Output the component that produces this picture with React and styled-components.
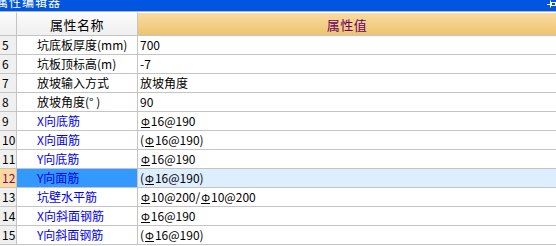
import React from 'react';
import styled, { createGlobalStyle } from 'styled-components';

const GlobalStyle = createGlobalStyle`
  html, body {
    margin: 0;
    padding: 0;
    background: #ffffff;
    overflow: hidden;
  }
  body {
    font-family: "Noto Sans CJK SC", "Noto Sans", sans-serif;
    font-size: 12px;
    color: #000;
  }
`;

const Panel = styled.div`
  width: 556px;
  height: 246px;
  overflow: hidden;
  display: flex;
  flex-direction: column;
`;

const TitleBar = styled.div`
  height: 11px;
  flex: none;
  background: #0056e0;
  border-bottom: 1px solid #a9b4c4;
  display: flex;
  align-items: flex-start;
  justify-content: space-between;
  overflow: hidden;
`;

const Title = styled.span`
  color: #fff;
  font-size: 12px;
  line-height: 12px;
  margin: -4px 0 0 -4px;
  letter-spacing: 1px;
`;

const PinIcon = styled.svg`
  width: 9px;
  height: 8px;
  margin-right: 0px;
  flex: none;
`;

const Grid = styled.div`
  display: grid;
  grid-template-columns: 17px 121px 1fr;
  grid-auto-rows: 19px;
`;

const HeaderCell = styled.div`
  height: 24px;
  box-sizing: border-box;
  border-top: 1px solid #fff;
  border-bottom: 1px solid #c4c4c4;
  border-right: ${p => (p.$last ? 'none' : '1px solid #c4c4c4')};
  background: ${p =>
    p.$accent
      ? 'linear-gradient(#f9dca3, #efc36d)'
      : 'linear-gradient(#fbfbfb, #efefef)'};
  color: ${p => (p.$accent ? '#6a006a' : '#000')};
  font-size: 13px;
  display: flex;
  align-items: center;
  justify-content: center;
  letter-spacing: 0.5px;
`;

const HeaderRow = styled(Grid)`
  grid-auto-rows: 24px;
`;

const NumCell = styled.div`
  box-sizing: border-box;
  border-right: 1px solid #c4c4c4;
  border-bottom: 1px solid #c4c4c4;
  background: ${p => (p.$active ? '#fed99a' : '#f0f0f0')};
  color: ${p => (p.$active ? '#7a0a7a' : '#000')};
  padding-left: 2px;
  line-height: 18px;
  font-size: 12px;
`;

const NameCell = styled.div`
  box-sizing: border-box;
  border-right: 1px solid #c4c4c4;
  border-bottom: 1px solid #c4c4c4;
  background: ${p => (p.$active ? '#3399ff' : '#fff')};
  color: ${p => (p.$link ? '#0000ee' : '#000')};
  padding-left: 20px;
  line-height: 18px;
  white-space: nowrap;
  overflow: hidden;
`;

const ValueCell = styled.div`
  box-sizing: border-box;
  border-bottom: 1px solid #c4c4c4;
  background: ${p => (p.$active ? '#ddeeff' : '#fff')};
  padding-left: 2px;
  line-height: 18px;
  white-space: nowrap;
  overflow: hidden;
`;

const Rebar = styled.span`
  display: inline-block;
  border-bottom: 1px solid #000;
  line-height: 11px;
  margin: 0 1px 0 1px;
  font-size: 11px;
`;

// renders a value, turning each Φ into the steel grade mark
const Value = ({ text }) => {
  const parts = text.split('Φ');
  return (
    <>
      {parts.map((p, i) => (
        <React.Fragment key={i}>
          {i > 0 && <Rebar>Φ</Rebar>}
          {p}
        </React.Fragment>
      ))}
    </>
  );
};

const rows = [
  { n: 5, name: '坑底板厚度(mm)', value: '700' },
  { n: 6, name: '坑板顶标高(m)', value: '-7' },
  { n: 7, name: '放坡输入方式', value: '放坡角度' },
  { n: 8, name: '放坡角度(° )', value: '90' },
  { n: 9, name: 'X向底筋', value: 'Φ16@190', link: true },
  { n: 10, name: 'X向面筋', value: '(Φ16@190)', link: true },
  { n: 11, name: 'Y向底筋', value: 'Φ16@190', link: true },
  { n: 12, name: 'Y向面筋', value: '(Φ16@190)', link: true, active: true },
  { n: 13, name: '坑壁水平筋', value: 'Φ10@200/Φ10@200', link: true },
  { n: 14, name: 'X向斜面钢筋', value: 'Φ16@190', link: true },
  { n: 15, name: 'Y向斜面钢筋', value: '(Φ16@190)', link: true },
];

export default function App() {
  return (
    <>
      <GlobalStyle />
      <Panel>
        <TitleBar>
          <Title>属性编辑器</Title>
          <PinIcon viewBox="0 0 9 8">
            <path d="M0 4.5h3" stroke="#fff" strokeWidth="1" />
            <path d="M3.5 0.5v7" stroke="#fff" strokeWidth="1" />
            <rect x="4.5" y="2.5" width="4" height="3" fill="none" stroke="#fff" strokeWidth="1" />
          </PinIcon>
        </TitleBar>
        <HeaderRow>
          <HeaderCell />
          <HeaderCell>属性名称</HeaderCell>
          <HeaderCell $accent $last>属性值</HeaderCell>
        </HeaderRow>
        <Grid>
          {rows.map(r => (
            <React.Fragment key={r.n}>
              <NumCell $active={r.active}>{r.n}</NumCell>
              <NameCell $active={r.active} $link={r.link}>{r.name}</NameCell>
              <ValueCell $active={r.active}>
                <Value text={r.value} />
              </ValueCell>
            </React.Fragment>
          ))}
        </Grid>
      </Panel>
    </>
  );
}
